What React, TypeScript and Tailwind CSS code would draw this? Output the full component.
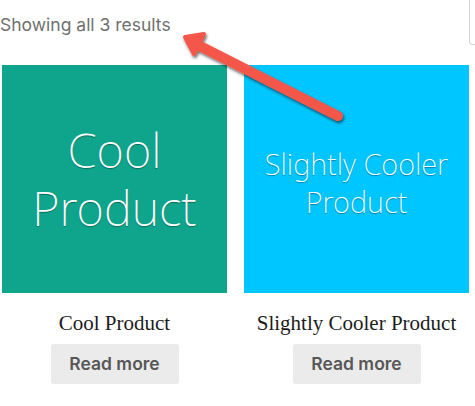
const products = [
  {
    name: "Cool Product",
    bg: "bg-[#0fa58c]",
    lines: ["Cool", "Product"],
    art: "text-[47px] leading-[58px] pt-[56px]",
  },
  {
    name: "Slightly Cooler Product",
    bg: "bg-[#00c6ff]",
    lines: ["Slightly Cooler", "Product"],
    art: "text-[29px] leading-[38px] pt-[80px]",
  },
];

function Arrow() {
  return (
    <svg
      className="pointer-events-none absolute left-0 top-0"
      width="475"
      height="140"
      viewBox="0 0 475 140"
    >
      <defs>
        <filter id="sh" x="-20%" y="-20%" width="140%" height="140%">
          <feDropShadow dx="1" dy="2" stdDeviation="1.5" floodColor="#000" floodOpacity="0.6" />
        </filter>
      </defs>
      <g filter="url(#sh)" fill="#f4574a" stroke="#f4574a" strokeLinecap="round" strokeLinejoin="round">
        <line x1="338" y1="116" x2="196" y2="44" strokeWidth="10" />
        <polygon points="185,37 204,34 194,54" strokeWidth="4" />
      </g>
    </svg>
  );
}

export default function App() {
  return (
    <div className="relative h-[406px] w-[475px] overflow-hidden bg-white">
      <div className="flex h-[45px] items-start">
        <p className="pt-[12px] font-['Inter',sans-serif] text-[17.5px] text-[#707070]">
          Showing all 3 results
        </p>
        <div className="ml-auto h-[45px] w-[30px] -mr-[24px] rounded-b-[4px] border border-t-0 border-[#d4d4d4]" />
      </div>

      <ul className="mt-[20px] ml-[2px] grid grid-cols-[225px_225px] gap-x-[17px]">
        {products.map((p) => (
          <li key={p.name} className="flex flex-col items-center">
            <div
              className={`${p.bg} h-[228px] w-[225px] text-center font-['Noto_Sans',sans-serif] font-extralight text-white [text-shadow:0_1px_1px_rgba(0,0,0,0.35)] ${p.art}`}
            >
              {p.lines.map((l) => (
                <div key={l}>{l}</div>
              ))}
            </div>
            <h2 className="mt-[18px] font-['Liberation_Serif',serif] text-[21px] leading-[25px] text-[#1c1c1c]">
              {p.name}
            </h2>
            <button className="mt-[8px] h-[40px] w-[128px] rounded-[3px] bg-[#ebebeb] font-['Inter',sans-serif] text-[17.5px] font-semibold text-[#575757]">
              Read more
            </button>
          </li>
        ))}
      </ul>

      <Arrow />
    </div>
  );
}
